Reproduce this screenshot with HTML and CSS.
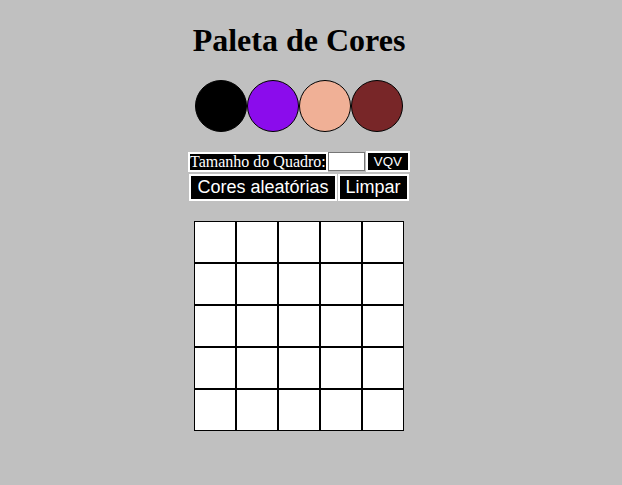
FILE: index.html
```html
<!DOCTYPE html>
<html lang="pt-BR">
<head>
<meta charset="utf-8">
<title>Paleta de Cores</title>
<link rel="stylesheet" href="styles.css">
</head>
<body>
<main class="page">
  <h1 class="title">Paleta de Cores</h1>
  <div class="palette">
    <div class="color c-black"></div>
    <div class="color c-purple"></div>
    <div class="color c-peach"></div>
    <div class="color c-wine"></div>
  </div>
  <div class="controls">
    <div class="row">
      <label class="size-label" for="board-size">Tamanho do Quadro:</label><input id="board-size" class="size-input" type="number"><button class="btn btn-small">VQV</button>
    </div>
    <div class="row row-2">
      <button class="btn btn-big">Cores aleatórias</button><button class="btn btn-big btn-clear">Limpar</button>
    </div>
  </div>
  <div class="board">
    <div class="pixel"></div><div class="pixel"></div><div class="pixel"></div><div class="pixel"></div><div class="pixel"></div>
    <div class="pixel"></div><div class="pixel"></div><div class="pixel"></div><div class="pixel"></div><div class="pixel"></div>
    <div class="pixel"></div><div class="pixel"></div><div class="pixel"></div><div class="pixel"></div><div class="pixel"></div>
    <div class="pixel"></div><div class="pixel"></div><div class="pixel"></div><div class="pixel"></div><div class="pixel"></div>
    <div class="pixel"></div><div class="pixel"></div><div class="pixel"></div><div class="pixel"></div><div class="pixel"></div>
  </div>
</main>
</body>
</html>
```

FILE: styles.css
```css
html, body {
  margin: 0;
  padding: 0;
  background: #c0c0c0;
}

.page {
  width: 598px;
  display: flex;
  flex-direction: column;
  align-items: center;
  font-family: "Liberation Serif", "Times New Roman", serif;
}

.title {
  margin: 22px 0 21px;
  font-size: 32px;
  line-height: 37px;
  font-weight: bold;
  color: #000;
}

.palette {
  display: flex;
}

.color {
  width: 50px;
  height: 50px;
  border: 1px solid #000;
  border-radius: 50%;
}

.c-black { background: #000; }
.c-purple { background: #8b0cec; }
.c-peach { background: #f0b096; }
.c-wine { background: #782628; }

.controls {
  margin-top: 19px;
  display: flex;
  flex-direction: column;
  align-items: center;
}

.row {
  display: flex;
  align-items: center;
}

.row-2 {
  margin-top: 2px;
}

.size-label {
  background: #000;
  color: #fff;
  border: 2px solid #fff;
  font-size: 16px;
  line-height: 16px;
  height: 16px;
  padding: 0;
}

.size-input {
  width: 35px;
  height: 17px;
  padding: 0;
  margin: 0;
  border: 1px solid #767676;
  background: #fff;
  box-sizing: content-box;
}

.btn {
  background: #000;
  color: #fff;
  border: 2px solid #fff;
  font-family: "Liberation Sans", Arial, sans-serif;
  padding: 1px 6px;
  margin: 0;
}

.btn-small {
  font-size: 13.33px;
  line-height: 15px;
  margin-left: 1px;
}

.btn-big {
  font-size: 18px;
  line-height: 21px;
}

.btn-clear {
  margin-left: 1px;
}

.board {
  margin-top: 20px;
  display: grid;
  grid-template-columns: repeat(5, 42px);
  grid-auto-rows: 42px;
}

.pixel {
  background: #fff;
  border: 1px solid #000;
}
```
